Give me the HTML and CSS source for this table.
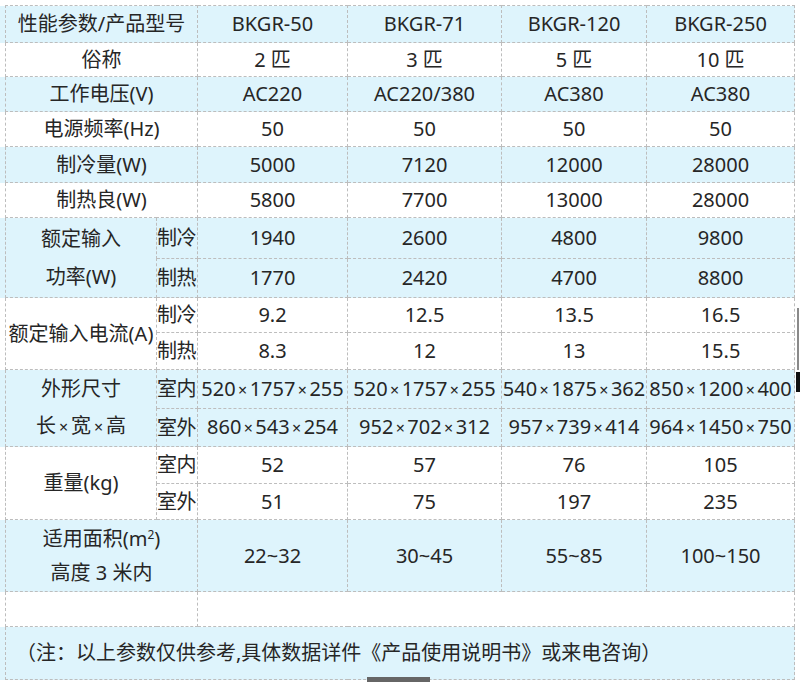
FILE: index.html
```html
<!DOCTYPE html>
<html lang="zh-CN">
<head>
<meta charset="utf-8">
<title>性能参数</title>
<link rel="stylesheet" href="styles.css">
</head>
<body>
<div class="page">
<table class="spec">
  <colgroup>
    <col class="c-label"><col class="c-sub"><col class="c-a"><col class="c-b"><col class="c-c"><col class="c-d">
  </colgroup>
  <tr class="blue h37"><td colspan="2">性能参数/产品型号</td><td>BKGR-50</td><td>BKGR-71</td><td>BKGR-120</td><td>BKGR-250</td></tr>
  <tr class="h34"><td colspan="2">俗称</td><td>2 匹</td><td>3 匹</td><td>5 匹</td><td>10 匹</td></tr>
  <tr class="blue h35"><td colspan="2">工作电压(V)</td><td>AC220</td><td>AC220/380</td><td>AC380</td><td>AC380</td></tr>
  <tr class="h35"><td colspan="2">电源频率(Hz)</td><td>50</td><td>50</td><td>50</td><td>50</td></tr>
  <tr class="blue h36"><td colspan="2">制冷量(W)</td><td>5000</td><td>7120</td><td>12000</td><td>28000</td></tr>
  <tr class="h35"><td colspan="2">制热良(W)</td><td>5800</td><td>7700</td><td>13000</td><td>28000</td></tr>
  <tr class="blue h41"><td rowspan="2" class="multi lh38">额定输入<br>功率(W)</td><td class="sub">制冷</td><td>1940</td><td>2600</td><td>4800</td><td>9800</td></tr>
  <tr class="blue h39"><td class="sub">制热</td><td>1770</td><td>2420</td><td>4700</td><td>8800</td></tr>
  <tr class="h35"><td rowspan="2">额定输入电流(A)</td><td class="sub">制冷</td><td>9.2</td><td>12.5</td><td>13.5</td><td>16.5</td></tr>
  <tr class="h37"><td class="sub">制热</td><td>8.3</td><td>12</td><td>13</td><td>15.5</td></tr>
  <tr class="blue h37"><td rowspan="2" class="multi lh37">外形尺寸<br>长<span class="xs">×</span>宽<span class="xs">×</span>高</td><td class="sub">室内</td><td>520<span class="x">×</span>1757<span class="x">×</span>255</td><td>520<span class="x">×</span>1757<span class="x">×</span>255</td><td>540<span class="x">×</span>1875<span class="x">×</span>362</td><td>850<span class="x">×</span>1200<span class="x">×</span>400</td></tr>
  <tr class="blue h36"><td class="sub">室外</td><td>860<span class="x">×</span>543<span class="x">×</span>254</td><td>952<span class="x">×</span>702<span class="x">×</span>312</td><td>957<span class="x">×</span>739<span class="x">×</span>414</td><td>964<span class="x">×</span>1450<span class="x">×</span>750</td></tr>
  <tr class="h37"><td rowspan="2">重量(kg)</td><td class="sub">室内</td><td>52</td><td>57</td><td>76</td><td>105</td></tr>
  <tr class="h36"><td class="sub">室外</td><td>51</td><td>75</td><td>197</td><td>235</td></tr>
  <tr class="blue h72"><td colspan="2" class="multi lh34">适用面积(m<sup>2</sup>)<br>高度 3 米内</td><td>22~32</td><td>30~45</td><td>55~85</td><td>100~150</td></tr>
  <tr class="h35"><td colspan="2"></td><td colspan="4"></td></tr>
  <tr class="blue h53"><td colspan="6" class="note">（注：以上参数仅供参考,具体数据详件《产品使用说明书》或来电咨询）</td></tr>
</table>
<div class="scroll-track"></div>
<div class="scroll-thumb"></div>
<div class="hbar"></div>
</div>
</body>
</html>
```

FILE: styles.css
```css
html, body {
  margin: 0;
  padding: 0;
  background: #ffffff;
}

.page {
  position: relative;
  width: 800px;
  height: 682px;
  overflow: hidden;
  padding-top: 5px;
  box-sizing: border-box;
}

.spec {
  margin-left: 5px;
  border-collapse: collapse;
  table-layout: fixed;
  width: 790px;
  font-family: "Noto Sans", "Noto Sans CJK SC", sans-serif;
  font-size: 20px;
  color: #262626;
}

.c-label { width: 151px; }
.c-sub { width: 41px; }
.c-a { width: 150px; }
.c-b { width: 154px; }
.c-c { width: 145px; }
.c-d { width: 148px; }

.spec td {
  border: 1px dashed #bdbdbd;
  padding: 0;
  text-align: center;
  vertical-align: middle;
  white-space: nowrap;
  overflow: visible;
  line-height: 24px;
}

.spec tr.blue td {
  background: #def4fc;
}

.spec tr.blue td:first-child {
  box-shadow: -6px 0 0 #def4fc;
}

.h34 { height: 34px; }
.h35 { height: 35px; }
.h36 { height: 36px; }
.h37 { height: 37px; }
.h39 { height: 39px; }
.h41 { height: 41px; }
.h53 { height: 53px; }
.h72 { height: 72px; }

.spec td.lh38 { line-height: 38px; }
.spec td.lh37 { line-height: 37px; }
.spec td.lh34 { line-height: 34px; }

.spec td.sub {
  text-align: left;
  letter-spacing: -0.5px;
}

.x {
  display: inline-block;
  width: 14px;
  font-size: 16px;
  text-align: center;
}

.xs {
  display: inline-block;
  width: 15px;
  font-size: 16px;
  text-align: center;
}

sup {
  font-size: 12px;
  line-height: 0;
  vertical-align: 7px;
}

.spec td.note {
  text-align: left;
  padding-left: 10px;
}

.scroll-track {
  position: absolute;
  right: 1px;
  top: 308px;
  width: 2px;
  height: 62px;
  background: #8a8a8a;
}

.scroll-thumb {
  position: absolute;
  right: 0;
  top: 372px;
  width: 4px;
  height: 20px;
  background: #111111;
}

.hbar {
  position: absolute;
  left: 367px;
  bottom: 0;
  width: 63px;
  height: 5px;
  background: #666666;
}
```
